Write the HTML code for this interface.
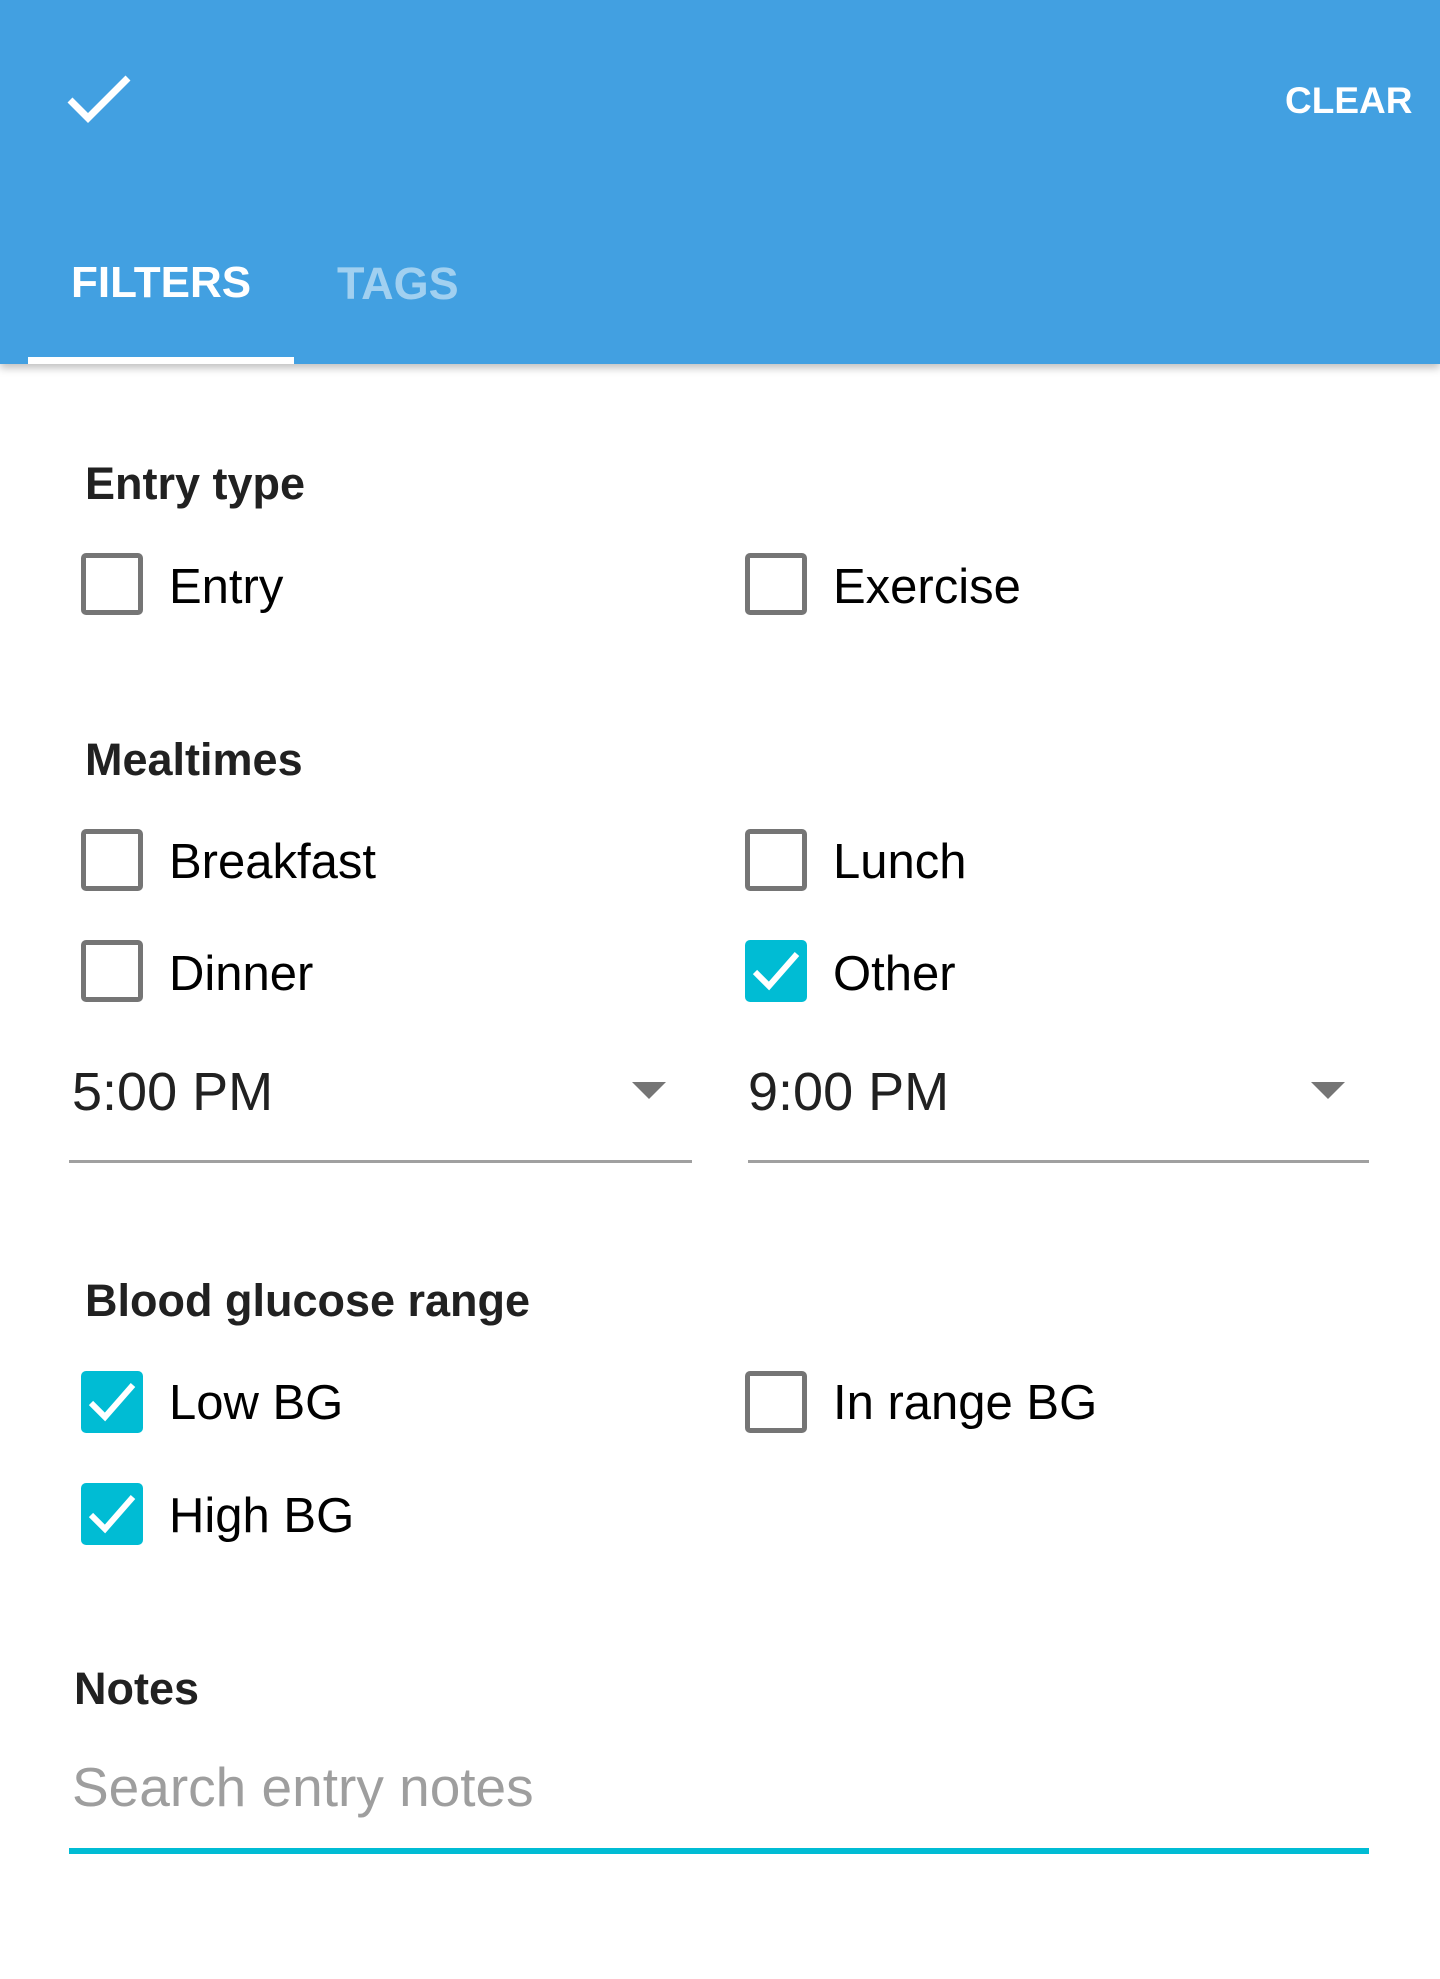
<!DOCTYPE html>
<html><head><meta charset="utf-8"><style>
html,body{margin:0;padding:0}
body{width:1440px;height:1979px;position:relative;background:#fff;font-family:"Liberation Sans",sans-serif;overflow:hidden}
.hdr{position:absolute;left:0;top:0;width:1440px;height:364px;background:#42a0e1;box-shadow:0 4px 8px rgba(0,0,0,0.25)}
.t{position:absolute;line-height:1;white-space:nowrap}
.b{font-weight:bold}
.cb{position:absolute;width:52px;height:52px;border:5px solid #757575;border-radius:5px;box-sizing:content-box}
.cc{position:absolute;width:62px;height:62px;background:#00bcd4;border-radius:5px}
.cc svg{position:absolute;left:0;top:0}
.ul{position:absolute;height:3px;background:#a0a0a0}
.arr{position:absolute;width:0;height:0;border-left:17px solid transparent;border-right:17px solid transparent;border-top:17px solid #757575}
.l{font-size:49px}
.h{font-size:45px;color:#212121;font-weight:bold}
</style></head><body>
<div class="hdr">
<svg style="position:absolute;left:66px;top:72px" width="66" height="56" viewBox="0 0 66 56"><path d="M4 28 L22 46 L62 6" stroke="#fff" stroke-width="7" fill="none"/></svg>
<div class="t b" style="left:1285px;top:82px;font-size:37px;color:#fff">CLEAR</div>
<div class="t b" style="left:71px;top:261px;font-size:44px;color:#fff">FILTERS</div>
<div class="t b" style="left:337px;top:261px;font-size:45px;color:rgba(255,255,255,0.5)">TAGS</div>
<div style="position:absolute;left:28px;top:357px;width:266px;height:7px;background:#fff"></div>
</div>

<div class="t h" style="left:85px;top:461px">Entry type</div>
<div class="cb" style="left:81px;top:553px"></div><div class="t l" style="left:169px;top:563px">Entry</div>
<div class="cb" style="left:745px;top:553px"></div><div class="t l" style="left:833px;top:563px">Exercise</div>

<div class="t h" style="left:85px;top:737px">Mealtimes</div>
<div class="cb" style="left:81px;top:829px"></div><div class="t l" style="left:169px;top:838px">Breakfast</div>
<div class="cb" style="left:745px;top:829px"></div><div class="t l" style="left:833px;top:838px">Lunch</div>
<div class="cb" style="left:81px;top:940px"></div><div class="t l" style="left:169px;top:950px">Dinner</div>
<div class="cc" style="left:745px;top:940px"><svg width="62" height="62"><path d="M10 32 L24 46 L52 14" stroke="#fff" stroke-width="6" fill="none"/></svg></div><div class="t l" style="left:833px;top:950px">Other</div>

<div class="t" style="left:72px;top:1065px;font-size:54px;color:#212121">5:00 PM</div>
<div class="arr" style="left:632px;top:1082px"></div>
<div class="ul" style="left:69px;top:1160px;width:623px"></div>
<div class="t" style="left:748px;top:1065px;font-size:54px;color:#212121">9:00 PM</div>
<div class="arr" style="left:1311px;top:1082px"></div>
<div class="ul" style="left:748px;top:1160px;width:621px"></div>

<div class="t h" style="left:85px;top:1278px">Blood glucose range</div>
<div class="cc" style="left:81px;top:1371px"><svg width="62" height="62"><path d="M10 32 L24 46 L52 14" stroke="#fff" stroke-width="6" fill="none"/></svg></div><div class="t l" style="left:169px;top:1379px">Low BG</div>
<div class="cb" style="left:745px;top:1371px"></div><div class="t l" style="left:833px;top:1379px">In range BG</div>
<div class="cc" style="left:81px;top:1483px"><svg width="62" height="62"><path d="M10 32 L24 46 L52 14" stroke="#fff" stroke-width="6" fill="none"/></svg></div><div class="t l" style="left:169px;top:1492px">High BG</div>

<div class="t h" style="left:74px;top:1666px">Notes</div>
<div class="t" style="left:72px;top:1760px;font-size:55px;color:#9e9e9e">Search entry notes</div>
<div style="position:absolute;left:69px;top:1848px;width:1300px;height:6px;background:#00bcd4"></div>
</body></html>
